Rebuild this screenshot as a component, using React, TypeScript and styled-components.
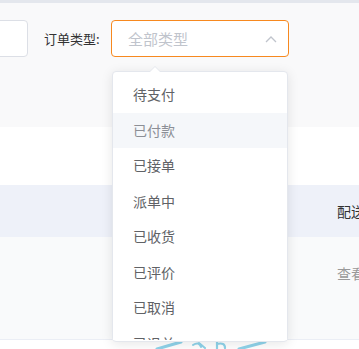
import React from 'react';
import styled, { createGlobalStyle } from 'styled-components';

const options = ['待支付', '已付款', '已接单', '派单中', '已收货', '已评价', '已取消', '已退单'];

const App: React.FC = () => {
    return (
        <Page>
            <GlobalStyle />
            <TopLine />
            <FilterBar>
                <TextInput />
                <Label>订单类型:</Label>
                <SelectWrap>
                    <Select>
                        <Placeholder>全部类型</Placeholder>
                        <svg width="12" height="8" viewBox="0 0 12 8">
                            <path d="M1 7 L6 2 L11 7" fill="none" stroke="#c0c4cc" strokeWidth="1.3" />
                        </svg>
                    </Select>
                    <Dropdown>
                        <Pointer />
                        <Scroll>
                            {options.map((o, i) => (
                                <Option key={o} hover={i === 1}>{o}</Option>
                            ))}
                        </Scroll>
                    </Dropdown>
                </SelectWrap>
            </FilterBar>
            <Table>
                <Row tone="white" height={58} />
                <Row tone="active" height={52}>
                    <Cell>配送</Cell>
                </Row>
                <Row tone="light" height={72}>
                    <Cell muted>查看</Cell>
                </Row>
                <Row tone="light" height={30} />
            </Table>
            <Watermark>
                <svg width="120" height="10" viewBox="0 0 120 10">
                    <g fill="none" stroke="#8fd3ea" strokeWidth="3" strokeLinecap="round">
                        <path d="M2 10 L26 3" />
                        <path d="M38 6 Q44 2 46 8 M44 4 L50 9" strokeWidth="2" />
                        <path d="M62 2 L62 10 M62 5 Q70 3 70 9" strokeWidth="2.2" />
                        <path d="M84 10 L110 3" />
                    </g>
                </svg>
            </Watermark>
        </Page>
    )
}
export default App

const GlobalStyle = createGlobalStyle`
    body {
        margin: 0;
        background: #ffffff;
        font-family: 'Noto Sans CJK SC', 'Noto Sans', sans-serif;
    }
`
const Page = styled.div`
    width: 359px;
    height: 349px;
    position: relative;
    overflow: hidden;
    background: #ffffff;
`
const TopLine = styled.div`
    height: 3px;
    background: #e4e7ed;
`
const FilterBar = styled.div`
    height: 124px;
    background: #f9f9fa;
    display: flex;
    align-items: flex-start;
    padding-top: 17px;
    box-sizing: border-box;
`
const TextInput = styled.div`
    width: 40px;
    height: 37px;
    margin-left: -12px;
    box-sizing: border-box;
    border: 1px solid #dcdfe6;
    border-radius: 4px;
    background: #fff;
`
const Label = styled.span`
    margin-left: 16px;
    width: 67px;
    line-height: 37px;
    font-size: 13px;
    color: #333333;
`
const SelectWrap = styled.div`
    position: relative;
`
const Select = styled.div`
    width: 178px;
    height: 37px;
    box-sizing: border-box;
    border: 1px solid #f7891f;
    border-radius: 4px;
    background: #fff;
    display: flex;
    align-items: center;
    justify-content: space-between;
    padding: 0 11px 0 16px;
`
const Placeholder = styled.span`
    font-size: 15px;
    color: #c0c4cc;
`
const Dropdown = styled.div`
    position: absolute;
    top: 51px;
    left: 1px;
    width: 176px;
    height: 271px;
    box-sizing: border-box;
    background: #fff;
    border: 1px solid #e4e7ed;
    border-radius: 4px;
    box-shadow: 0 2px 12px rgba(0, 0, 0, 0.1);
    z-index: 10;
`
const Pointer = styled.div`
    position: absolute;
    top: -6px;
    left: 36px;
    width: 0;
    height: 0;
    border-left: 6px solid transparent;
    border-right: 6px solid transparent;
    border-bottom: 6px solid #e4e7ed;
    &::after {
        content: '';
        position: absolute;
        top: 1px;
        left: -5px;
        border-left: 5px solid transparent;
        border-right: 5px solid transparent;
        border-bottom: 5px solid #fff;
    }
`
const Scroll = styled.ul`
    list-style: none;
    margin: 0;
    padding: 5px 0 0;
    height: 268px;
    box-sizing: border-box;
    overflow: hidden;
`
const Option = styled.li<{ hover?: boolean }>`
    height: 35.5px;
    line-height: 35.5px;
    padding-left: 20px;
    font-size: 14px;
    color: ${(p) => (p.hover ? '#8c8f96' : '#606266')};
    background: ${(p) => (p.hover ? '#f5f7fa' : '#fff')};
`
const Table = styled.div`
    border-bottom: 1px solid #ebeef5;
`
const Row = styled.div<{ tone: 'white' | 'active' | 'light'; height: number }>`
    height: ${(p) => p.height}px;
    box-sizing: border-box;
    display: flex;
    justify-content: flex-end;
    align-items: center;
    background: ${(p) => (p.tone === 'active' ? '#eef1f9' : p.tone === 'light' ? '#f9fafb' : '#ffffff')};
`
const Cell = styled.span<{ muted?: boolean }>`
    font-size: 14px;
    color: ${(p) => (p.muted ? '#999999' : '#303133')};
    margin-right: -8px;
    width: 30px;
    white-space: nowrap;
`
const Watermark = styled.div`
    position: absolute;
    left: 155px;
    bottom: 0;
    line-height: 0;
`
